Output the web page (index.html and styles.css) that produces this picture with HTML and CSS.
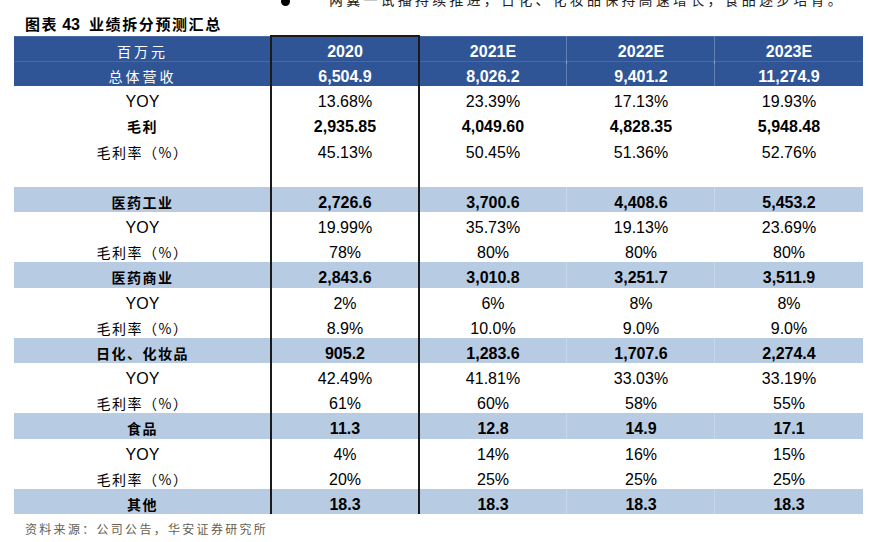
FILE: index.html
```html
<!DOCTYPE html>
<html lang="zh">
<head>
<meta charset="utf-8">
<title>业绩拆分预测汇总</title>
<link rel="stylesheet" href="styles.css">
</head>
<body>
<div class="page">
  <div class="cutline"><span class="bullet"></span><span class="cuttext">两翼一试播持续推进，日化、化妆品保持高速增长，食品逐步培育。</span></div>
  <div class="title"><span class="zh">图表</span><span class="num">43</span><span class="zh">业绩拆分预测汇总</span></div>
  <div class="table">
    <div class="row dark"><div class="c lab">百万元</div><div class="c">2020</div><div class="c">2021E</div><div class="c">2022E</div><div class="c">2023E</div></div>
    <div class="row dark"><div class="c lab">总体营收</div><div class="c">6,504.9</div><div class="c">8,026.2</div><div class="c">9,401.2</div><div class="c">11,274.9</div></div>
    <div class="row"><div class="c yoy">YOY</div><div class="c">13.68%</div><div class="c">23.39%</div><div class="c">17.13%</div><div class="c">19.93%</div></div>
    <div class="row bold"><div class="c lab">毛利</div><div class="c">2,935.85</div><div class="c">4,049.60</div><div class="c">4,828.35</div><div class="c">5,948.48</div></div>
    <div class="row"><div class="c lab">毛利率（%）</div><div class="c">45.13%</div><div class="c">50.45%</div><div class="c">51.36%</div><div class="c">52.76%</div></div>
    <div class="row"><div class="c"></div><div class="c"></div><div class="c"></div><div class="c"></div><div class="c"></div></div>
    <div class="row light"><div class="c lab">医药工业</div><div class="c">2,726.6</div><div class="c">3,700.6</div><div class="c">4,408.6</div><div class="c">5,453.2</div></div>
    <div class="row"><div class="c yoy">YOY</div><div class="c">19.99%</div><div class="c">35.73%</div><div class="c">19.13%</div><div class="c">23.69%</div></div>
    <div class="row"><div class="c lab">毛利率（%）</div><div class="c">78%</div><div class="c">80%</div><div class="c">80%</div><div class="c">80%</div></div>
    <div class="row light"><div class="c lab">医药商业</div><div class="c">2,843.6</div><div class="c">3,010.8</div><div class="c">3,251.7</div><div class="c">3,511.9</div></div>
    <div class="row"><div class="c yoy">YOY</div><div class="c">2%</div><div class="c">6%</div><div class="c">8%</div><div class="c">8%</div></div>
    <div class="row"><div class="c lab">毛利率（%）</div><div class="c">8.9%</div><div class="c">10.0%</div><div class="c">9.0%</div><div class="c">9.0%</div></div>
    <div class="row light"><div class="c lab">日化、化妆品</div><div class="c">905.2</div><div class="c">1,283.6</div><div class="c">1,707.6</div><div class="c">2,274.4</div></div>
    <div class="row"><div class="c yoy">YOY</div><div class="c">42.49%</div><div class="c">41.81%</div><div class="c">33.03%</div><div class="c">33.19%</div></div>
    <div class="row"><div class="c lab">毛利率（%）</div><div class="c">61%</div><div class="c">60%</div><div class="c">58%</div><div class="c">55%</div></div>
    <div class="row light"><div class="c lab">食品</div><div class="c">11.3</div><div class="c">12.8</div><div class="c">14.9</div><div class="c">17.1</div></div>
    <div class="row"><div class="c yoy">YOY</div><div class="c">4%</div><div class="c">14%</div><div class="c">16%</div><div class="c">15%</div></div>
    <div class="row"><div class="c lab">毛利率（%）</div><div class="c">20%</div><div class="c">25%</div><div class="c">25%</div><div class="c">25%</div></div>
    <div class="row light"><div class="c lab">其他</div><div class="c">18.3</div><div class="c">18.3</div><div class="c">18.3</div><div class="c">18.3</div></div>
    <div class="box"></div>
  </div>
  <div class="source">资料来源：公司公告，华安证券研究所</div>
</div>
</body>
</html>
```
FILE: styles.css
```css
html, body {
  margin: 0;
  padding: 0;
  background: #ffffff;
}
.page {
  width: 869px;
  height: 542px;
  overflow: hidden;
  font-family: "Liberation Sans", Arial, "Noto Sans CJK SC", sans-serif;
  color: #000;
}
.cutline {
  height: 16px;
  margin-top: -9px;
  display: flex;
  align-items: center;
  font-family: "Noto Sans CJK SC", sans-serif;
  font-size: 14px;
  line-height: 16px;
  color: #222;
}
.bullet {
  width: 9px;
  height: 9px;
  border-radius: 50%;
  background: #000;
  margin-left: 281px;
  margin-top: 4px;
}
.cuttext {
  margin-left: 39px;
  letter-spacing: 3.2px;
}
.title {
  padding: 4px 0 0 25px;
  height: 25px;
  line-height: 25px;
  font-weight: bold;
  font-size: 15px;
  display: flex;
  align-items: baseline;
}
.title .zh {
  font-family: "Noto Sans CJK SC", sans-serif;
  letter-spacing: 1.6px;
}
.title .num {
  font-family: "Liberation Sans", Arial, sans-serif;
  font-size: 16px;
  margin: 0 9px 0 4px;
}
.table {
  position: relative;
  margin-left: 14px;
  width: 849px;
}
.row {
  display: grid;
  grid-template-columns: 257px 148px 148px 148px 148px;
  height: 25.16px;
  align-items: center;
  font-size: 16px;
}
.c {
  text-align: center;
  line-height: 25px;
  padding-top: 3px;
  white-space: nowrap;
}
.c.lab {
  font-family: "Noto Sans CJK SC", sans-serif;
  font-size: 14px;
  letter-spacing: 1.5px;
  padding-top: 3px;
}
.c.yoy {
  font-size: 16px;
}
.row.dark {
  background: #2f5597;
  color: #fff;
  font-weight: bold;
  box-shadow: inset 0 1px 0 rgba(255, 255, 255, 0.12);
}
.row.dark .c.lab {
  font-weight: normal;
  letter-spacing: 3px;
}
.row.dark .c + .c + .c,
.row.light .c + .c + .c {
  border-left: 1px solid rgba(255, 255, 255, 0.25);
  margin-left: -1px;
}
.row.light {
  background: #b7cbe3;
  font-weight: bold;
}
.row.bold {
  font-weight: bold;
}
.box {
  position: absolute;
  left: 256px;
  top: -1px;
  width: 146px;
  bottom: 0;
  border: 2px solid #1a1a1a;
  border-bottom: none;
  pointer-events: none;
}
.source {
  padding-left: 25px;
  margin-top: 7px;
  font-family: "Noto Sans CJK SC", sans-serif;
  font-size: 12px;
  letter-spacing: 2.3px;
  color: #66604f;
  line-height: 16px;
}
```
